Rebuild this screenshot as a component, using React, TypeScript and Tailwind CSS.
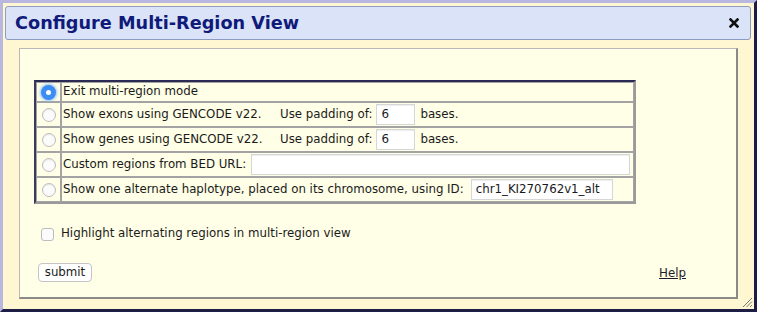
import * as React from "react";

function Radio({ checked }: { checked?: boolean }) {
  if (checked) {
    return (
      <span className="flex h-[15px] w-[15px] items-center justify-center rounded-full bg-[#3b8cf3] shadow-[0_0_3px_1px_#8fc0fb]">
        <span className="h-[5px] w-[5px] rounded-full bg-white" />
      </span>
    );
  }
  return (
    <span className="block h-[14px] w-[14px] rounded-full border border-[#bdbdbd] bg-[#fbfbfb] shadow-[inset_0_1px_1px_#e6e6e6]" />
  );
}

function TextBox({ value, className }: { value?: string; className: string }) {
  return (
    <span
      className={
        "inline-flex h-[21px] shrink-0 items-center border border-[#d6d6d6] bg-white px-[4px] align-middle shadow-[inset_0_1px_1px_#eee] " +
        className
      }
    >
      {value}
    </span>
  );
}

const rows: { id: string; content: React.ReactNode }[] = [
  { id: "exit", content: <span>Exit multi-region mode</span> },
  {
    id: "exons",
    content: (
      <span className="flex items-center whitespace-nowrap">
        <span className="w-[217px] shrink-0">Show exons using GENCODE v22.</span>
        <span>Use padding of:</span>
        <TextBox value="6" className="ml-[4px] w-[39px]" />
        <span className="ml-[5px]">bases.</span>
      </span>
    ),
  },
  {
    id: "genes",
    content: (
      <span className="flex items-center whitespace-nowrap">
        <span className="w-[217px] shrink-0">Show genes using GENCODE v22.</span>
        <span>Use padding of:</span>
        <TextBox value="6" className="ml-[4px] w-[39px]" />
        <span className="ml-[5px]">bases.</span>
      </span>
    ),
  },
  {
    id: "bed",
    content: (
      <span className="flex items-center whitespace-nowrap">
        <span className="shrink-0">Custom regions from BED URL:</span>
        <TextBox className="ml-[5px] w-[379px]" />
      </span>
    ),
  },
  {
    id: "alt",
    content: (
      <span className="flex items-center whitespace-nowrap">
        <span className="shrink-0">Show one alternate haplotype, placed on its chromosome, using ID:</span>
        <TextBox value="chr1_KI270762v1_alt" className="ml-[7px] w-[142px]" />
      </span>
    ),
  },
];

export default function App() {
  return (
    <div className="relative h-[312px] w-[757px] border-t-[3px] border-l-[3px] border-r-[3px] border-b-[3px] border-t-[#b7b7df] border-l-[#b7b7df] border-r-[#1c1c45] border-b-[#1c1c45] bg-[#fff7d2] pt-[3px] pl-[2px] pr-[3px] font-['DejaVu_Sans',Verdana,sans-serif] text-[11.8px] text-[#1a1a1a]">
      {/* title bar */}
      <div className="flex h-[34px] items-center justify-between rounded-[3px] border border-[#8d9cc2] bg-[#dae3f7] pl-[9px] pr-[11px]">
        <span className="mt-[1px] text-[17.7px] font-bold text-[#0f1a7a]">Configure Multi-Region View</span>
        <svg width="10" height="10" viewBox="0 0 10 10" aria-hidden="true">
          <path d="M1.5 1.5 L8.5 8.5 M8.5 1.5 L1.5 8.5" stroke="#111" strokeWidth="2.6" strokeLinecap="square" />
        </svg>
      </div>

      {/* content panel */}
      <div className="mt-[8px] ml-[14px] mr-[13px] h-[251px] border border-r-2 border-b-2 border-t-[#b9b9b9] border-l-[#b9b9b9] border-r-[#8a8a8a] border-b-[#8a8a8a] bg-[#fffee6] pt-[31px] pl-[14px]">
        <table className="w-[602px] border-separate border-spacing-0 border-t-2 border-l-2 border-r-2 border-b-2 border-t-[#2a2a55] border-l-[#3a3a5a] border-r-[#9a9a9a] border-b-[#9a9a9a]">
          <tbody>
            {rows.map((r, i) => (
              <tr key={r.id}>
                <td
                  className={
                    "w-[25px] border border-[#a3a3a3] " + (i === 0 ? "h-[20px]" : "h-[25px]")
                  }
                >
                  <span className="flex justify-center">
                    <Radio checked={i === 0} />
                  </span>
                </td>
                <td className="border border-[#a3a3a3] pl-[1px]">{r.content}</td>
              </tr>
            ))}
          </tbody>
        </table>

        <div className="mt-[22px] flex h-[16px] items-center pl-[7px]">
          <span className="block h-[13px] w-[13px] rounded-[3px] border border-[#bdbdbd] bg-[#fbfbfb]" />
          <span className="ml-[7px]">Highlight alternating regions in multi-region view</span>
        </div>

        <div className="mt-[21px] flex items-center justify-between pl-[4px] pr-[50px]">
          <span className="flex h-[19px] w-[54px] items-center justify-center rounded-[4px] border border-[#c4c4c4] bg-white">
            submit
          </span>
          <span className="mt-[2px] text-[#1c1c2c] underline">Help</span>
        </div>
      </div>

      {/* resize grip */}
      <svg className="absolute right-[1px] bottom-[1px]" width="12" height="12" viewBox="0 0 12 12" aria-hidden="true">
        <path d="M11 2 L2 11 M11 5.5 L5.5 11 M11 9 L9 11" stroke="#777" strokeWidth="1" />
      </svg>
    </div>
  );
}
